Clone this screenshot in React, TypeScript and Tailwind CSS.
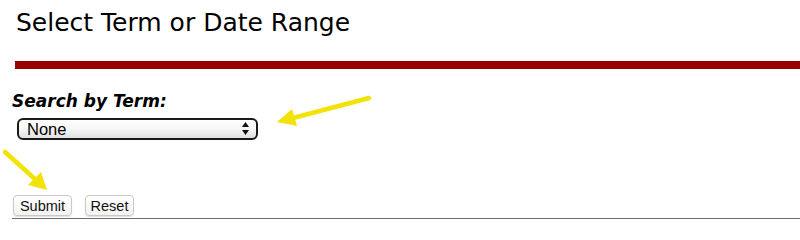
import React from "react";

export default function App() {
  return (
    <div className="relative w-[800px] h-[229px] bg-white overflow-hidden">
      <div
        className="pl-[16px] pt-[8px] text-[25px] leading-[30px] text-black"
        style={{ fontFamily: '"DejaVu Sans", Verdana, sans-serif' }}
      >
        Select Term or Date Range
      </div>
      <div className="mt-[23px] ml-[15px] h-[8px] bg-[#990000]" />
      <div
        className="mt-[22px] pl-[12px] text-[17px] leading-[20px] font-bold italic text-black"
        style={{ fontFamily: '"DejaVu Sans", Verdana, sans-serif' }}
      >
        Search by Term:
      </div>
      <div className="relative mt-[6px] ml-[17px] w-[241px] h-[22px]">
        <select
          className="appearance-none w-full h-full rounded-[6px] border-2 border-[#1a1a1a] bg-gradient-to-b from-white via-[#f6f6f6] to-[#e0e0e0] pl-[8px] text-[16.5px] leading-[18px] text-black outline-none"
          style={{ fontFamily: '"Liberation Sans", Arial, sans-serif' }}
          defaultValue="None"
        >
          <option>None</option>
        </select>
        <svg
          className="absolute right-[9px] top-[5px] pointer-events-none"
          width="7"
          height="13"
          viewBox="0 0 7 13"
        >
          <polygon points="3.5,0 7,5 0,5" fill="#111" />
          <polygon points="0,8 7,8 3.5,13" fill="#111" />
        </svg>
      </div>
      <div
        className="mt-[56px] ml-[13px] flex gap-[13px]"
        style={{ fontFamily: '"Liberation Sans", Arial, sans-serif' }}
      >
        <button className="w-[59px] h-[21px] rounded-[4px] border border-[#c8c8c8] bg-gradient-to-b from-white to-[#f3f3f3] shadow-[0_1px_1px_rgba(0,0,0,0.12)] text-[14.5px] leading-[16px] text-[#111]">
          Submit
        </button>
        <button className="w-[49px] h-[21px] rounded-[4px] border border-[#c8c8c8] bg-gradient-to-b from-white to-[#f3f3f3] shadow-[0_1px_1px_rgba(0,0,0,0.12)] text-[14.5px] leading-[16px] text-[#111]">
          Reset
        </button>
      </div>
      <div className="mt-[2px] ml-[12px] h-[1px] bg-[#6f6f6f]" />

      <svg
        className="absolute left-0 top-0 pointer-events-none"
        width="800"
        height="229"
        viewBox="0 0 800 229"
      >
        <line x1="369" y1="98" x2="293" y2="118" stroke="#f2e205" strokeWidth="4.5" strokeLinecap="round" />
        <polygon points="277,122 292,109 297,126" fill="#f2e205" />
        <line x1="5" y1="152" x2="36" y2="180" stroke="#f2e205" strokeWidth="4.5" strokeLinecap="round" />
        <polygon points="47,190 28,185 41,172" fill="#f2e205" />
      </svg>
    </div>
  );
}
